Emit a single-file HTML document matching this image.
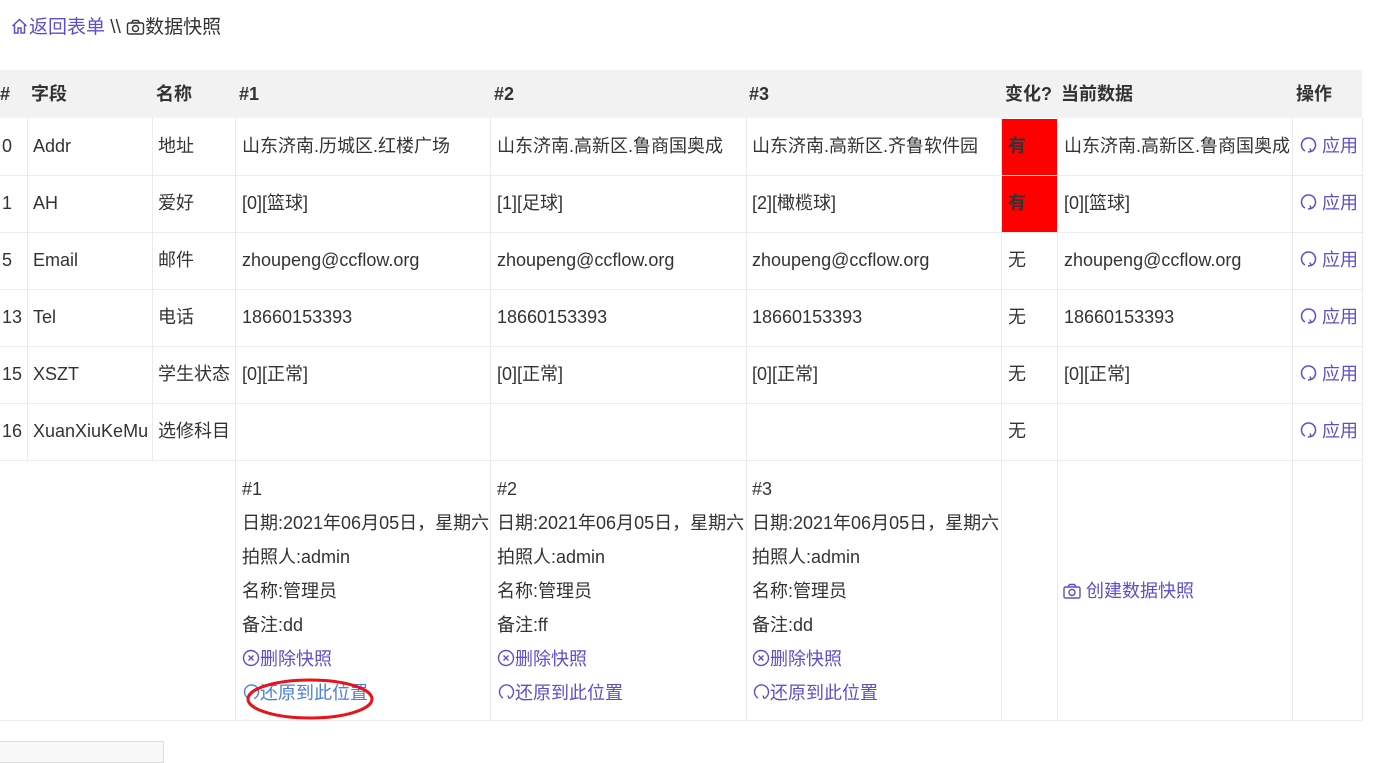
<!DOCTYPE html>
<html><head><meta charset="utf-8"><style>
body{margin:0;width:1386px;height:750px;overflow:hidden;background:#fff;font-family:"Liberation Sans","Noto Sans CJK SC",sans-serif;font-size:18px;color:#333;position:relative}
.a{position:absolute;white-space:nowrap}
.v{position:absolute;top:118px;height:602px;width:1px;background:#ececec}
.vs{position:absolute;top:118px;height:342px;width:1px;background:#ececec}
.h{position:absolute;left:0;width:1362px;height:1px;background:#ececec}
.c{position:absolute;height:57px;line-height:57px;white-space:nowrap}
.hd{position:absolute;top:70px;height:48px;line-height:48px;font-weight:bold;font-size:18px;color:#333}
.lk{color:#5a4fcf}
.red{position:absolute;left:1002px;width:55px;height:56px;background:#f00}
svg{vertical-align:-2px}
.blk{position:absolute;top:472px;line-height:34px;white-space:nowrap}
</style></head><body>
<div class="a" style="left:10px;top:16px;line-height:24px;font-size:19px"><span class="lk"><svg width="19" height="18" viewBox="0 0 18 18"><path d="M2 9L9 2.5 16 9M4 7.5V16h3.5v-5h3v5H14V7.5" fill="none" stroke="#5a4fcf" stroke-width="1.5"/></svg>返回表单</span> \\ <svg width="19" height="16" viewBox="0 0 18 16"><rect x="1" y="4" width="16" height="11" rx="1.5" fill="none" stroke="#333" stroke-width="1.4"/><path d="M5 4l1.5-2.5h5L13 4" fill="none" stroke="#333" stroke-width="1.4"/><circle cx="9" cy="9.5" r="3" fill="none" stroke="#333" stroke-width="1.4"/></svg>数据快照</div>
<div style="position:absolute;left:0;top:70px;width:1362px;height:48px;background:#f2f2f2"></div>
<div class="hd" style="left:0">#</div><div class="hd" style="left:31px">字段</div><div class="hd" style="left:156px">名称</div><div class="hd" style="left:239px">#1</div><div class="hd" style="left:494px">#2</div><div class="hd" style="left:749px">#3</div><div class="hd" style="left:1005px">变化?</div><div class="hd" style="left:1061px">当前数据</div><div class="hd" style="left:1296px">操作</div>
<div class="red" style="top:119px"></div><div class="red" style="top:176px"></div>
<div class="vs" style="left:27px"></div><div class="vs" style="left:152px"></div><div class="v" style="left:235px"></div><div class="v" style="left:490px"></div><div class="v" style="left:746px"></div><div class="v" style="left:1001px"></div><div class="v" style="left:1057px"></div><div class="v" style="left:1292px"></div><div class="v" style="left:1362px"></div>
<div class="h" style="top:175px"></div><div class="h" style="top:232px"></div><div class="h" style="top:289px"></div><div class="h" style="top:346px"></div><div class="h" style="top:403px"></div><div class="h" style="top:460px"></div><div class="h" style="top:720px"></div>

<div class="c" style="top:118px;left:2px">0</div><div class="c" style="top:118px;left:33px">Addr</div><div class="c" style="top:118px;left:158px">地址</div><div class="c" style="top:118px;left:242px">山东济南.历城区.红楼广场</div><div class="c" style="top:118px;left:497px">山东济南.高新区.鲁商国奥成</div><div class="c" style="top:118px;left:752px">山东济南.高新区.齐鲁软件园</div><div class="c" style="top:118px;left:1008px;font-weight:bold">有</div><div class="c" style="top:118px;left:1064px">山东济南.高新区.鲁商国奥成</div>
<div class="c" style="top:175px;left:2px">1</div><div class="c" style="top:175px;left:33px">AH</div><div class="c" style="top:175px;left:158px">爱好</div><div class="c" style="top:175px;left:242px">[0][篮球]</div><div class="c" style="top:175px;left:497px">[1][足球]</div><div class="c" style="top:175px;left:752px">[2][橄榄球]</div><div class="c" style="top:175px;left:1008px;font-weight:bold">有</div><div class="c" style="top:175px;left:1064px">[0][篮球]</div>
<div class="c" style="top:232px;left:2px">5</div><div class="c" style="top:232px;left:33px">Email</div><div class="c" style="top:232px;left:158px">邮件</div><div class="c" style="top:232px;left:242px">zhoupeng@ccflow.org</div><div class="c" style="top:232px;left:497px">zhoupeng@ccflow.org</div><div class="c" style="top:232px;left:752px">zhoupeng@ccflow.org</div><div class="c" style="top:232px;left:1008px">无</div><div class="c" style="top:232px;left:1064px">zhoupeng@ccflow.org</div>
<div class="c" style="top:289px;left:2px">13</div><div class="c" style="top:289px;left:33px">Tel</div><div class="c" style="top:289px;left:158px">电话</div><div class="c" style="top:289px;left:242px">18660153393</div><div class="c" style="top:289px;left:497px">18660153393</div><div class="c" style="top:289px;left:752px">18660153393</div><div class="c" style="top:289px;left:1008px">无</div><div class="c" style="top:289px;left:1064px">18660153393</div>
<div class="c" style="top:346px;left:2px">15</div><div class="c" style="top:346px;left:33px">XSZT</div><div class="c" style="top:346px;left:158px">学生状态</div><div class="c" style="top:346px;left:242px">[0][正常]</div><div class="c" style="top:346px;left:497px">[0][正常]</div><div class="c" style="top:346px;left:752px">[0][正常]</div><div class="c" style="top:346px;left:1008px">无</div><div class="c" style="top:346px;left:1064px">[0][正常]</div>
<div class="c" style="top:403px;left:2px">16</div><div class="c" style="top:403px;left:33px">XuanXiuKeMu</div><div class="c" style="top:403px;left:158px">选修科目</div><div class="c" style="top:403px;left:1008px">无</div>

<div class="c lk" style="top:118px;left:1299px"><svg width="18" height="18" viewBox="0 0 18 18"><path d="M6 15A7 7 0 1 1 12 15.5M12 15.5l-1-3M12 15.5l-3 .5" fill="none" stroke="#5a4fcf" stroke-width="1.5"/></svg> 应用</div>
<div class="c lk" style="top:175px;left:1299px"><svg width="18" height="18" viewBox="0 0 18 18"><path d="M6 15A7 7 0 1 1 12 15.5M12 15.5l-1-3M12 15.5l-3 .5" fill="none" stroke="#5a4fcf" stroke-width="1.5"/></svg> 应用</div>
<div class="c lk" style="top:232px;left:1299px"><svg width="18" height="18" viewBox="0 0 18 18"><path d="M6 15A7 7 0 1 1 12 15.5M12 15.5l-1-3M12 15.5l-3 .5" fill="none" stroke="#5a4fcf" stroke-width="1.5"/></svg> 应用</div>
<div class="c lk" style="top:289px;left:1299px"><svg width="18" height="18" viewBox="0 0 18 18"><path d="M6 15A7 7 0 1 1 12 15.5M12 15.5l-1-3M12 15.5l-3 .5" fill="none" stroke="#5a4fcf" stroke-width="1.5"/></svg> 应用</div>
<div class="c lk" style="top:346px;left:1299px"><svg width="18" height="18" viewBox="0 0 18 18"><path d="M6 15A7 7 0 1 1 12 15.5M12 15.5l-1-3M12 15.5l-3 .5" fill="none" stroke="#5a4fcf" stroke-width="1.5"/></svg> 应用</div>
<div class="c lk" style="top:403px;left:1299px"><svg width="18" height="18" viewBox="0 0 18 18"><path d="M6 15A7 7 0 1 1 12 15.5M12 15.5l-1-3M12 15.5l-3 .5" fill="none" stroke="#5a4fcf" stroke-width="1.5"/></svg> 应用</div>

<div class="blk" style="left:242px">#1<br>日期:2021年06月05日，星期六<br>拍照人:admin<br>名称:管理员<br>备注:dd<br><span class="lk"><svg width="18" height="18" viewBox="0 0 18 18"><circle cx="9" cy="9" r="7.5" fill="none" stroke="#5a4fcf" stroke-width="1.4"/><path d="M6.5 6.5l5 5M11.5 6.5l-5 5" stroke="#5a4fcf" stroke-width="1.4"/></svg>删除快照</span><br><span style="color:#4a7fe0"><svg width="18" height="18" viewBox="0 0 18 18"><path d="M6 15A7 7 0 1 1 12 15.5" fill="none" stroke="#4a7fe0" stroke-width="1.4"/></svg>还原到此位置</span></div>
<div class="blk" style="left:497px">#2<br>日期:2021年06月05日，星期六<br>拍照人:admin<br>名称:管理员<br>备注:ff<br><span class="lk"><svg width="18" height="18" viewBox="0 0 18 18"><circle cx="9" cy="9" r="7.5" fill="none" stroke="#5a4fcf" stroke-width="1.4"/><path d="M6.5 6.5l5 5M11.5 6.5l-5 5" stroke="#5a4fcf" stroke-width="1.4"/></svg>删除快照</span><br><span class="lk"><svg width="18" height="18" viewBox="0 0 18 18"><path d="M6 15A7 7 0 1 1 12 15.5M12 15.5l-1-3" fill="none" stroke="#5a4fcf" stroke-width="1.4"/></svg>还原到此位置</span></div>
<div class="blk" style="left:752px">#3<br>日期:2021年06月05日，星期六<br>拍照人:admin<br>名称:管理员<br>备注:dd<br><span class="lk"><svg width="18" height="18" viewBox="0 0 18 18"><circle cx="9" cy="9" r="7.5" fill="none" stroke="#5a4fcf" stroke-width="1.4"/><path d="M6.5 6.5l5 5M11.5 6.5l-5 5" stroke="#5a4fcf" stroke-width="1.4"/></svg>删除快照</span><br><span class="lk"><svg width="18" height="18" viewBox="0 0 18 18"><path d="M6 15A7 7 0 1 1 12 15.5M12 15.5l-1-3" fill="none" stroke="#5a4fcf" stroke-width="1.4"/></svg>还原到此位置</span></div>
<div class="a lk" style="left:1063px;top:578px;line-height:26px"><svg width="18" height="16" viewBox="0 0 18 16"><rect x="1" y="4" width="16" height="11" rx="1.5" fill="none" stroke="#5a4fcf" stroke-width="1.4"/><path d="M5 4l1.5-2.5h5L13 4" fill="none" stroke="#5a4fcf" stroke-width="1.4"/><circle cx="9" cy="9.5" r="3" fill="none" stroke="#5a4fcf" stroke-width="1.4"/></svg> 创建数据快照</div>
<svg style="position:absolute;left:244px;top:675px" width="134" height="48"><ellipse cx="66" cy="24" rx="62" ry="19" fill="none" stroke="#e8141a" stroke-width="3"/></svg>
<div style="position:absolute;left:-2px;top:741px;width:164px;height:20px;border:1px solid #ddd;background:#f8f8f8"></div>
</body></html>
